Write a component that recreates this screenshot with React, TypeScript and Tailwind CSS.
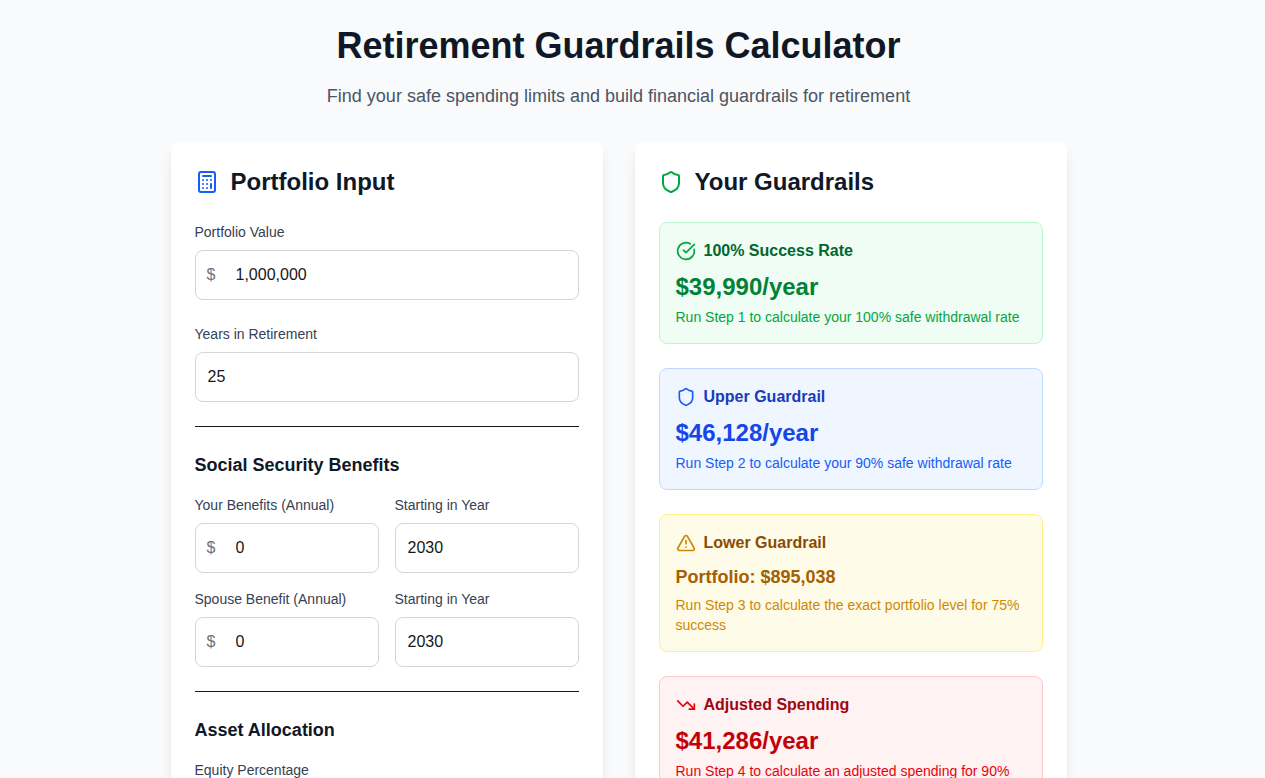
import React, { useState } from 'react';
import { Calculator, CircleCheckBig, Shield, TrendingDown, TriangleAlert } from 'lucide-react';

interface FieldProps {
    id: string;
    label: string;
    initialValue: string;
    currency?: boolean;
}

// Labelled text box, with an optional dollar sign in front of the value
const Field: React.FC<FieldProps> = ({ id, label, initialValue, currency }) => {
    const [value, setValue] = useState(initialValue);

    return (
        <div>
            <label htmlFor={id} className="block text-sm text-gray-700 mb-2">
                {label}
            </label>
            <div className="relative">
                {currency && (
                    <span className="absolute inset-y-0 left-3 flex items-center text-gray-500">$</span>
                )}
                <input
                    type="text"
                    id={id}
                    value={value}
                    onChange={(e) => setValue(e.target.value)}
                    className={`block w-full py-3 pr-3 border border-gray-300 rounded-lg focus:outline-none focus:ring-2 focus:ring-blue-500 ${currency ? 'pl-10' : 'pl-3'}`}
                />
            </div>
        </div>
    );
};

interface GuardrailCardProps {
    icon: React.ReactNode;
    title: string;
    value: string;
    note: string;
    cardClass: string;
    titleClass: string;
    valueClass: string;
    noteClass: string;
}

const GuardrailCard: React.FC<GuardrailCardProps> = ({ icon, title, value, note, cardClass, titleClass, valueClass, noteClass }) => (
    <div className={`border rounded-lg p-4 ${cardClass}`}>
        <div className="flex items-center gap-2 mb-2">
            {icon}
            <h3 className={`font-semibold ${titleClass}`}>{title}</h3>
        </div>
        <p className={`font-bold ${valueClass}`}>{value}</p>
        <p className={`text-sm mt-1 ${noteClass}`}>{note}</p>
    </div>
);

const App: React.FC = () => {
    return (
        <div className="min-h-screen bg-gray-50 pr-7 pt-[26px] pb-8 font-['Liberation_Sans',Arial,sans-serif] text-neutral-900">
            <div className="max-w-4xl mx-auto">
                <header className="text-center mb-8">
                    <h1 className="text-4xl font-bold text-gray-900 mb-4">Retirement Guardrails Calculator</h1>
                    <p className="text-lg text-gray-600">
                        Find your safe spending limits and build financial guardrails for retirement
                    </p>
                </header>

                <main className="grid grid-cols-2 gap-8">
                    <section className="bg-white rounded-lg shadow-lg p-6">
                        <h2 className="flex items-center gap-3 text-2xl font-semibold text-gray-900 mb-6">
                            <Calculator className="w-6 h-6 text-blue-600" />
                            Portfolio Input
                        </h2>
                        <div className="space-y-6">
                            <Field id="portfolio-value" label="Portfolio Value" initialValue="1,000,000" currency />
                            <Field id="retirement-years" label="Years in Retirement" initialValue="25" />

                            <div className="border-t pt-6">
                                <h3 className="text-lg font-semibold text-gray-900 mb-4">Social Security Benefits</h3>
                                <div className="grid grid-cols-2 gap-4">
                                    <Field id="your-benefits" label="Your Benefits (Annual)" initialValue="0" currency />
                                    <Field id="your-start" label="Starting in Year" initialValue="2030" />
                                    <Field id="spouse-benefit" label="Spouse Benefit (Annual)" initialValue="0" currency />
                                    <Field id="spouse-start" label="Starting in Year" initialValue="2030" />
                                </div>
                            </div>

                            <div className="border-t pt-6">
                                <h3 className="text-lg font-semibold text-gray-900 mb-4">Asset Allocation</h3>
                                <Field id="equity-percentage" label="Equity Percentage" initialValue="" />
                            </div>
                        </div>
                    </section>

                    <section className="bg-white rounded-lg shadow-lg p-6">
                        <h2 className="flex items-center gap-3 text-2xl font-semibold text-gray-900 mb-6">
                            <Shield className="w-6 h-6 text-green-600" />
                            Your Guardrails
                        </h2>
                        <div className="space-y-6">
                            <GuardrailCard
                                icon={<CircleCheckBig className="w-5 h-5 text-green-600" />}
                                title="100% Success Rate"
                                value="$39,990/year"
                                note="Run Step 1 to calculate your 100% safe withdrawal rate"
                                cardClass="bg-green-50 border-green-200"
                                titleClass="text-green-800"
                                valueClass="text-2xl text-green-700"
                                noteClass="text-green-600"
                            />
                            <GuardrailCard
                                icon={<Shield className="w-5 h-5 text-blue-600" />}
                                title="Upper Guardrail"
                                value="$46,128/year"
                                note="Run Step 2 to calculate your 90% safe withdrawal rate"
                                cardClass="bg-blue-50 border-blue-200"
                                titleClass="text-blue-800"
                                valueClass="text-2xl text-blue-700"
                                noteClass="text-blue-600"
                            />
                            <GuardrailCard
                                icon={<TriangleAlert className="w-5 h-5 text-yellow-600" />}
                                title="Lower Guardrail"
                                value="Portfolio: $895,038"
                                note="Run Step 3 to calculate the exact portfolio level for 75% success"
                                cardClass="bg-yellow-50 border-yellow-200"
                                titleClass="text-yellow-800"
                                valueClass="text-lg text-yellow-700"
                                noteClass="text-yellow-600"
                            />
                            <GuardrailCard
                                icon={<TrendingDown className="w-5 h-5 text-red-600" />}
                                title="Adjusted Spending"
                                value="$41,286/year"
                                note="Run Step 4 to calculate an adjusted spending for 90% success"
                                cardClass="bg-red-50 border-red-200"
                                titleClass="text-red-800"
                                valueClass="text-2xl text-red-700"
                                noteClass="text-red-600"
                            />
                        </div>
                    </section>
                </main>
            </div>
        </div>
    );
};

export default App;
